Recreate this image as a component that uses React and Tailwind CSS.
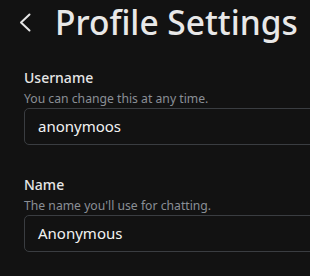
function Field({ label, hint, value }) {
  return (
    <div className="flex flex-col">
      <label className="text-[14px] leading-[19px] font-medium text-[#e6e6e6]">{label}</label>
      <p className="mt-[3px] text-[12.2px] leading-[17px] text-[#8a8f96]">{hint}</p>
      <div className="mt-[1px] flex h-[37px] w-[320px] items-center rounded-[5px] border border-[#3a3d41] px-[13px]">
        <span className="text-[15px] text-[#f2f2f2]">{value}</span>
      </div>
    </div>
  );
}

export default function App() {
  return (
    <div
      className="h-[276px] w-[310px] overflow-hidden bg-[#121212]"
      style={{ fontFamily: '"Noto Sans", sans-serif' }}
    >
      <div className="flex h-[44px] items-center">
        <svg className="ml-[19px] shrink-0" width="12" height="19" viewBox="0 0 12 19" fill="none">
          <path d="M10.5 1.5 2 9.5l8.5 8" stroke="#e6e6e6" strokeWidth="2" strokeLinecap="round" strokeLinejoin="round" />
        </svg>
        <h1 className="ml-[24px] whitespace-nowrap text-[33.5px] leading-[44px] font-medium text-[#e8e8e8]">Profile Settings</h1>
      </div>
      <div className="mt-[24px] flex flex-col gap-[30px] pl-[24px]">
        <Field label="Username" hint="You can change this at any time." value="anonymoos" />
        <Field label="Name" hint="The name you'll use for chatting." value="Anonymous" />
      </div>
    </div>
  );
}
